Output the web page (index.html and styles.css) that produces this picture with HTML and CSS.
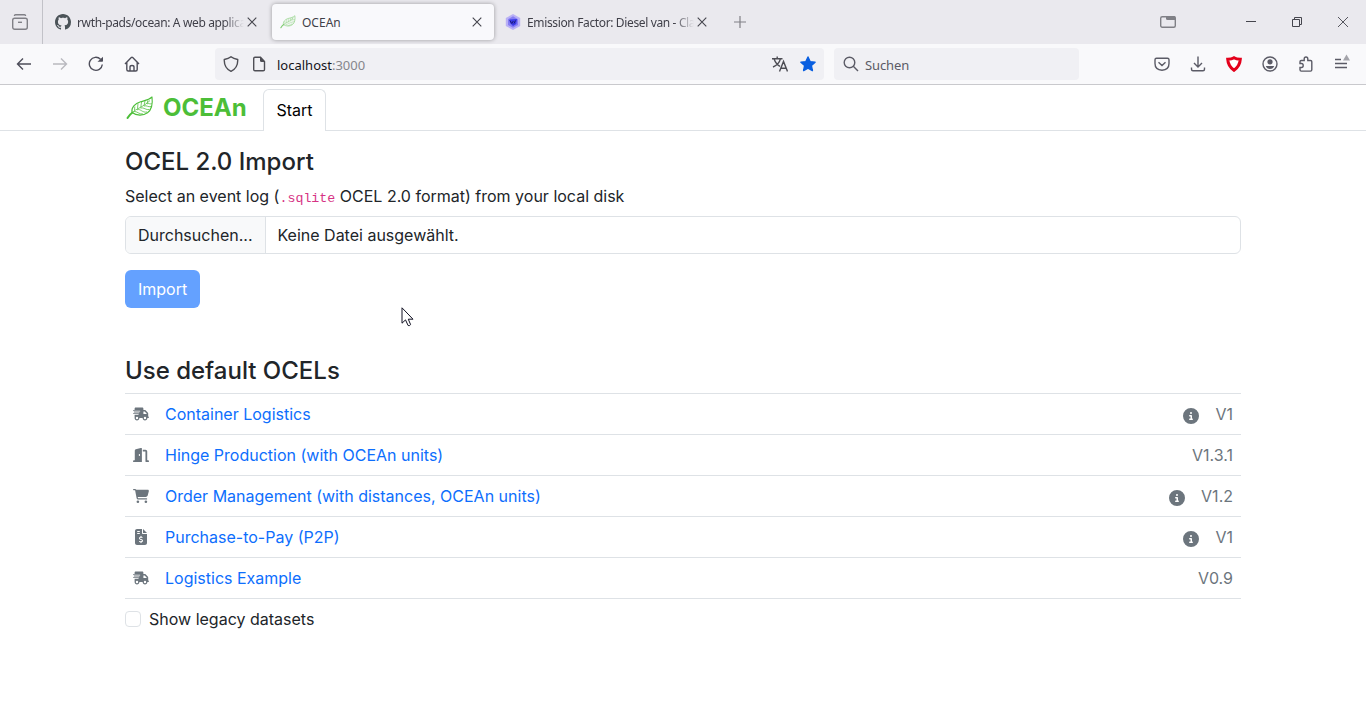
FILE: index.html
```html
<!DOCTYPE html>
<html lang="de">
<head>
<meta charset="utf-8">
<title>OCEAn</title>
<link rel="stylesheet" href="styles.css">
</head>
<body>
<svg class="defs" aria-hidden="true">
  <symbol id="close" viewBox="0 0 16 16"><path d="M3.7 3.7l8.6 8.6M12.3 3.7l-8.6 8.6" fill="none" stroke="currentColor" stroke-width="1.1"/></symbol>
  <symbol id="leaf" viewBox="0 0 28 24">
    <path d="M6 16.500C5 11.500 9 7.500 14.500 5.800C19 4.500 23 4 26 1C26.800 7.500 26 13.500 21.500 16.800C17 20 10.500 19.800 6 16.500Z" fill="none" stroke="currentColor" stroke-width="1.100" stroke-linejoin="round"/>
    <path d="M1.500 22Q3.500 18.500 6.500 16.500" fill="none" stroke="currentColor" stroke-width="2" stroke-linecap="round"/>
    <path d="M6.500 16.500C10 12.500 17 11.500 24 4.500M8.500 14.500L8.800 10.500M11.500 12.700L12 7.500M14.800 11.300L15.500 6M18 9.500L19 5M21 7.300L22 4.200M8 15.500C11 15 13 18.500 17 18M11 13.800C15 12.500 16 17 21 16M14.500 12C18 11 20 14.500 23.500 13.500M18 10C21 9 22 11.500 25 10.500M21 7.800C23 7 24 8.500 25.500 7.500" fill="none" stroke="currentColor" stroke-width=".75"/>
  </symbol>
  <symbol id="truck" viewBox="0 0 640 512"><path fill="currentColor" d="M112 0C85.500 0 64 21.500 64 48V96H16c-8.800 0-16 7.200-16 16s7.200 16 16 16H64 272c8.800 0 16 7.200 16 16s-7.200 16-16 16H64 48c-8.800 0-16 7.200-16 16s7.200 16 16 16H64 240c8.800 0 16 7.200 16 16s-7.200 16-16 16H64 16c-8.800 0-16 7.200-16 16s7.200 16 16 16H64 208c8.800 0 16 7.200 16 16s-7.200 16-16 16H64V416c0 53 43 96 96 96s96-43 96-96H384c0 53 43 96 96 96s96-43 96-96h32c17.700 0 32-14.300 32-32s-14.300-32-32-32V288 256 237.300c0-17-6.700-33.300-18.700-45.300L512 114.700c-12-12-28.300-18.700-45.300-18.700H416V48c0-26.500-21.500-48-48-48H112zM544 237.300V256H416V160h50.700L544 237.300zM160 368a48 48 0 1 1 0 96 48 48 0 1 1 0-96zm272 48a48 48 0 1 1 96 0 48 48 0 1 1 -96 0z"/></symbol>
  <symbol id="door" viewBox="0 0 576 512"><path fill="currentColor" d="M320 32c0-9.900-4.500-19.200-12.300-25.200S289.800-1.400 280.200 1l-179.900 45C79 51.300 64 70.500 64 92.500V448H32c-17.700 0-32 14.300-32 32s14.300 32 32 32H96 288h32V480 32zM256 256c0 17.700-10.700 32-24 32s-24-14.300-24-32s10.700-32 24-32s24 14.300 24 32zm96-128h96V480c0 17.700 14.300 32 32 32h64c17.700 0 32-14.300 32-32s-14.300-32-32-32H512V128c0-35.300-28.700-64-64-64H352v64z"/></symbol>
  <symbol id="cart" viewBox="0 0 576 512"><path fill="currentColor" d="M0 24C0 10.700 10.700 0 24 0H69.500c22 0 41.500 12.800 50.600 32h411c26.300 0 45.500 25 38.600 50.400l-41 152.300c-8.500 31.400-37 53.300-69.500 53.300H170.700l5.400 28.500c2.200 11.300 12.100 19.500 23.600 19.500H488c13.300 0 24 10.700 24 24s-10.700 24-24 24H199.700c-34.600 0-64.300-24.600-70.700-58.500L77.400 54.500c-.7-3.800-4-6.500-7.900-6.500H24C10.700 48 0 37.300 0 24zM128 464a48 48 0 1 1 96 0 48 48 0 1 1 -96 0zm336-48a48 48 0 1 1 0 96 48 48 0 1 1 0-96z"/></symbol>
  <symbol id="invoice" viewBox="0 0 384 512"><path fill="currentColor" d="M64 0C28.700 0 0 28.700 0 64V448c0 35.300 28.700 64 64 64H320c35.300 0 64-28.700 64-64V160H256c-17.700 0-32-14.300-32-32V0H64zM256 0V128H384L256 0zM64 80c0-8.800 7.200-16 16-16h64c8.800 0 16 7.200 16 16s-7.200 16-16 16H80c-8.800 0-16-7.200-16-16zm0 64c0-8.800 7.200-16 16-16h64c8.800 0 16 7.200 16 16s-7.200 16-16 16H80c-8.800 0-16-7.200-16-16zm128 72c8.800 0 16 7.200 16 16v17.300c8.500 1.200 16.700 3.100 24.100 5.100c8.500 2.300 13.600 11 11.300 19.600s-11 13.600-19.600 11.300c-11.100-3-22-5.200-32.100-5.300c-8.400-.1-17.400 1.800-23.600 5.500c-5.700 3.400-8.100 7.300-8.100 12.800c0 3.700 1.300 6.500 7.300 10.100c6.900 4.100 16.600 7.100 29.200 10.900l.5 .1c11.300 3.400 25.300 7.600 36.300 14.600c12.100 7.600 22.400 19.700 22.700 38.200c.3 19.300-9.600 33.300-22.900 41.600c-7.700 4.800-16.400 7.600-25.100 9.100V440c0 8.800-7.200 16-16 16s-16-7.200-16-16V422.200c-11.200-2.100-21.700-5.700-30.900-8.900c-2.100-.7-4.200-1.400-6.200-2.100c-8.400-2.800-12.900-11.900-10.100-20.200s11.900-12.900 20.200-10.100c2.500 .8 4.800 1.600 7.100 2.400c13.600 4.600 24.600 8.400 36.300 8.700c9.100 .3 17.900-1.700 23.700-5.300c5.100-3.200 7.900-7.300 7.800-14c-.1-4.600-1.800-7.800-7.700-11.600c-6.800-4.300-16.500-7.400-29-11.200l-1.600-.5c-11-3.300-24.300-7.300-34.800-13.700c-12-7.200-22.600-18.900-22.700-37.300c-.1-19.400 10.800-32.800 23.800-40.500c7.500-4.400 15.800-7.200 24.100-8.700V232c0-8.800 7.200-16 16-16z"/></symbol>
  <symbol id="info" viewBox="0 0 512 512"><path fill="currentColor" d="M256 512A256 256 0 1 0 256 0a256 256 0 1 0 0 512zM216 336h24V272H216c-13.300 0-24-10.700-24-24s10.700-24 24-24h48c13.300 0 24 10.700 24 24v88h8c13.300 0 24 10.700 24 24s-10.700 24-24 24H216c-13.300 0-24-10.700-24-24s10.700-24 24-24zm40-208a32 32 0 1 1 0 64 32 32 0 1 1 0-64z"/></symbol>
</svg>

<div class="tabbar">
  <div class="view-button">
    <svg class="icon muted" viewBox="0 0 16 16" fill="none" stroke="currentColor" stroke-width="1.400"><path d="M2.500 2V1.500Q2.500.7 3.500.7h9q1 0 1 .8V2"/><rect x=".7" y="4.300" width="14.600" height="11" rx="2"/><path d="M6 8.300h4"/></svg>
  </div>
  <div class="tab">
    <svg class="icon github" viewBox="0 0 16 16"><path fill="currentColor" d="M8 0C3.580 0 0 3.580 0 8c0 3.540 2.290 6.530 5.470 7.590.4.070.55-.17.55-.38 0-.19-.01-.82-.01-1.490-2.010.37-2.530-.49-2.690-.94-.09-.23-.48-.94-.82-1.130-.28-.15-.68-.52-.01-.53.63-.01 1.080.58 1.230.82.72 1.210 1.870.87 2.330.66.070-.52.28-.87.51-1.070-1.780-.2-3.640-.89-3.640-3.950 0-.87.31-1.590.82-2.150-.08-.2-.36-1.020.08-2.120 0 0 .67-.21 2.200.82.64-.18 1.320-.27 2-.27s1.360.09 2 .27c1.530-1.040 2.200-.82 2.200-.82.44 1.100.16 1.920.08 2.120.51.56.82 1.270.82 2.150 0 3.070-1.870 3.750-3.650 3.950.29.25.54.73.54 1.480 0 1.070-.01 1.930-.01 2.200 0 .21.15.46.55.38A8.010 8.010 0 0 0 16 8c0-4.420-3.580-8-8-8z"/></svg>
    <span class="tab-title long">rwth-pads/ocean: A web applica</span>
    <svg class="icon dark"><use href="#close"/></svg>
  </div>
  <div class="tab active">
    <svg class="icon tab-leaf"><use href="#leaf"/></svg>
    <span class="tab-title">OCEAn</span>
    <svg class="icon dark"><use href="#close"/></svg>
  </div>
  <div class="tab">
    <svg class="icon" viewBox="0 0 16 16"><path d="M8 0l7.200 4v8L8 16 .8 12V4z" fill="#b9b0f5"/><path d="M8 2.300l5 2.900v5.700l-5 2.900-5-2.900V5.200z" fill="#857cf3"/><path d="M4.500 5.500l7.500-.5-.7 5L8 12l-3-3z" fill="#3a3ae6"/><path d="M4.800 6.500l2 3 1.500-2.500M9 9.500l1.500-3" stroke="#1b1b78" fill="none"/></svg>
    <span class="tab-title long">Emission Factor: Diesel van - Cla</span>
    <svg class="icon dark"><use href="#close"/></svg>
  </div>
  <svg class="icon muted plus" viewBox="0 0 16 16"><path d="M8 2v12M2 8h12" stroke="currentColor" stroke-width="1.200"/></svg>
  <div class="window-buttons">
    <svg class="icon muted" viewBox="0 0 16 16"><rect x=".7" y="2.700" width="14.600" height="10.600" rx="1.500" fill="none" stroke="currentColor" stroke-width="1.400"/><path d="M6 2h8.500l1 1v3H7.500Q6 6 6 4.500z" fill="currentColor"/></svg>
    <svg class="icon dark" viewBox="0 0 16 16"><path d="M3 7.500h10" stroke="currentColor"/></svg>
    <svg class="icon dark" viewBox="0 0 16 16" fill="none" stroke="currentColor"><path d="M3.500 5.500h7v7h-7zM5.500 5.500v-2h7v7h-2"/></svg>
    <svg class="icon dark" viewBox="0 0 16 16"><path d="M3 3l10 10M13 3L3 13" stroke="currentColor" stroke-width=".9"/></svg>
  </div>
</div>

<div class="toolbar">
  <div class="nav-buttons">
    <svg class="icon" viewBox="0 0 16 16"><path d="M15 8H1.500M7 2.500L1.500 8 7 13.500"/></svg>
    <svg class="icon disabled" viewBox="0 0 16 16"><path d="M1 8h13.500M9 2.500L14.500 8 9 13.500"/></svg>
    <svg class="icon" viewBox="0 0 16 16"><path d="M14.300 8.500A6.500 6.500 0 1 1 12.500 3.300"/><path d="M9.500 5.800h4.700q.8 0 .8-.8V.8z" fill="currentColor" stroke="none"/></svg>
    <svg class="icon" viewBox="0 0 16 16"><path d="M1 8L7.300 1.500q.7-.6 1.400 0L15 8M2.800 6.500v7q0 1.500 1.500 1.500h7.400q1.500 0 1.500-1.500v-7M6 15v-4q0-1.500 2-1.500t2 1.500v4"/></svg>
  </div>
  <div class="urlbar">
    <svg class="icon" viewBox="0 0 16 16"><path d="M8 .8C6 2.400 3.500 3.100 1.300 3.500 1 9 3 13 8 15.300 13 13 15 9 14.700 3.500 12.500 3.100 10 2.400 8 .8z"/></svg>
    <svg class="icon page-icon" viewBox="0 0 16 16"><path d="M9.500 1.200H4Q2.700 1.200 2.700 2.500v11q0 1.300 1.300 1.300h8.200q1.300 0 1.300-1.300v-8z"/><path d="M9 1v3.500q0 1.500 1.500 1.500h3.500z" fill="currentColor" stroke="none"/></svg>
    <span class="url">localhost<span class="port">:3000</span></span>
    <svg class="icon translate" viewBox="0 0 16 16"><path d="M0 2.700h10.500M5.200.5v2.200M2 2.700C3.500 7 5.500 9 8 10.300M8.500 2.700C7.500 7 4.500 9.500 1 11M7.500 15.500L11.500 5.500l4 10M9 12.200h5"/></svg>
    <svg class="icon star" viewBox="0 0 16 16"><path d="M8 1l2.100 4.600 5 .6-3.700 3.400 1 5L8 12.100l-4.400 2.500 1-5L.9 6.200l5-.6z"/></svg>
  </div>
  <div class="searchbar">
    <svg class="icon" viewBox="0 0 16 16"><circle cx="6.500" cy="6.500" r="5.300"/><path d="M10.300 10.300l4.700 4.700"/></svg>
    <span class="search-label">Suchen</span>
  </div>
  <div class="actions">
    <svg class="icon" viewBox="0 0 16 16"><path d="M2.500 2.300h11q1.500 0 1.500 1.500V7.500q0 6.300-7 6.700Q1 13.800 1 7.500V3.800q0-1.500 1.500-1.500zM4.500 6.300L8 9.500l3.500-3.200"/></svg>
    <svg class="icon" viewBox="0 0 16 16"><path d="M8 .5v10M4 7l4 4 4-4M1.500 11.500v1.700q0 1.500 1.500 1.500h10q1.500 0 1.500-1.500v-1.700"/></svg>
    <svg class="icon ublock" viewBox="0 0 16 16"><path d="M8 1.700C6.500 2.600 4.500 3.100 1.700 3.200 2 8.500 4 11.500 8 14.300 12 11.500 14 8.500 14.300 3.200 11.500 3.100 9.500 2.600 8 1.700z"/></svg>
    <svg class="icon" viewBox="0 0 16 16"><circle cx="8" cy="8" r="7"/><circle cx="8" cy="5.800" r="2.600" fill="currentColor" stroke="none"/><path d="M3.800 10h8.400q-1 3-4.200 3t-4.200-3z" fill="currentColor" stroke="none"/></svg>
    <svg class="icon" viewBox="0 0 16 16"><path d="M2 7.500V5.800Q2 4.500 3.300 4.500H6.200V3q0-2 1.800-2t1.800 2v1.500h2.700q1.300 0 1.300 1.300v8q0 1.300-1.300 1.300H3.300Q2 15.100 2 13.800V11.500h1.500q1.700 0 1.700-2t-1.700-2z"/></svg>
    <svg class="icon menu" viewBox="0 0 16 18"><path d="M1 5.500h6M1 9.500h12M1 13.500h12"/><path d="M9 6.500L12.500.5l3.500 6z" fill="#a4a4aa" stroke="none"/></svg>
  </div>
</div>

<header class="app-header">
  <div class="container header-row">
    <div class="brand"><svg class="brand-leaf"><use href="#leaf"/></svg><span>OCEAn</span></div>
    <div class="nav-tab">Start</div>
  </div>
</header>

<main class="container content">
  <h4>OCEL 2.0 Import</h4>
  <p class="hint">Select an event log (<code>.sqlite</code> OCEL 2.0 format) from your local disk</p>
  <div class="file-input"><span class="browse">Durchsuchen...</span><span class="file-name">Keine Datei ausgewählt.</span></div>
  <button class="import" disabled>Import</button>

  <h4>Use default OCELs</h4>
  <div class="list">
    <div class="row"><svg class="icon"><use href="#truck"/></svg><a>Container Logistics</a><svg class="icon info"><use href="#info"/></svg><span>V1</span></div>
    <div class="row"><svg class="icon"><use href="#door"/></svg><a>Hinge Production (with OCEAn units)</a><span>V1.3.1</span></div>
    <div class="row"><svg class="icon"><use href="#cart"/></svg><a>Order Management (with distances, OCEAn units)</a><svg class="icon info"><use href="#info"/></svg><span>V1.2</span></div>
    <div class="row"><svg class="icon"><use href="#invoice"/></svg><a>Purchase-to-Pay (P2P)</a><svg class="icon info"><use href="#info"/></svg><span>V1</span></div>
    <div class="row"><svg class="icon"><use href="#truck"/></svg><a>Logistics Example</a><span>V0.9</span></div>
  </div>
  <label class="legacy"><input type="checkbox"><span>Show legacy datasets</span></label>
</main>

<svg class="cursor" viewBox="0 0 13 20"><path d="M1 .8v15.400l3.500-3.300 2.600 5.600q1.200.8 2.500-.9L7.300 12.200H12z" fill="#fff" stroke="#111122" stroke-width="1"/></svg>
</body>
</html>
```

FILE: styles.css
```css
* { box-sizing: border-box; }
body {
  margin: 0;
  height: 728px;
  overflow: hidden;
  background: #fff;
  color: #212529;
  font: 16px/24px Inter, sans-serif;
}
.defs { position: absolute; width: 0; height: 0; }
.icon { width: 16px; height: 16px; flex: none; display: block; }
.muted { color: #808086; }
.dark { color: #45454d; }

/* browser tab strip */
.tabbar {
  display: flex;
  align-items: center;
  height: 44px;
  background: #eae9ee;
  font: 12px/18px "Noto Sans", sans-serif;
  color: #3f3f48;
}
.view-button {
  display: flex;
  align-items: center;
  width: 43px;
  height: 44px;
  padding-left: 12px;
  margin-right: 4px;
  border-right: 1px solid #c2c2c8;
}
.tab {
  display: flex;
  align-items: center;
  width: 222px;
  height: 36px;
  margin-right: 3px;
  padding-left: 8px;
  border-radius: 4px;
}
.tab.active { background: #f9f9fc; box-shadow: 0 0 4px rgba(0, 0, 0, .35); }
.tab-title {
  width: 167px;
  padding-top: 2px;
  margin-left: 6px;
  overflow: hidden;
  white-space: nowrap;
}
.tab-title.long {
  letter-spacing: -.36px;
  -webkit-mask-image: linear-gradient(to left, transparent 0, #000 20px);
  mask-image: linear-gradient(to left, transparent 0, #000 20px);
}
.github { color: #4b5358; }
.tab-leaf { color: #7fcb72; }
.plus { margin-left: 10px; }
.window-buttons { display: flex; margin-left: auto; padding-right: 15px; gap: 30px; }
.window-buttons .icon:first-child { margin-right: 37px; }

/* browser navigation bar */
.toolbar {
  display: flex;
  align-items: center;
  height: 41px;
  background: #f9f9fb;
  border-bottom: 1px solid #c9c9cd;
  font: 13px/18px "Noto Sans", sans-serif;
  color: #5b5b66;
}
.toolbar .icon { fill: none; stroke: currentColor; stroke-width: 1.4; }
.nav-buttons { display: flex; gap: 20px; width: 215px; padding-left: 16px; color: #4e4e5a; }
.toolbar .disabled { color: #b9b9bf; }
.urlbar, .searchbar { display: flex; align-items: center; height: 32px; background: #f0f0f4; border-radius: 4px; }
.urlbar { width: 609px; padding: 0 8px; color: #4e4e55; }
.page-icon { margin-left: 12px; }
.url { margin-left: 10px; padding-top: 2px; color: #15141a; }
.port { color: #86868c; }
.translate { margin-left: auto; }
.toolbar .star { margin-left: 12px; fill: #0a5fe0; stroke: #0a5fe0; stroke-linejoin: round; }
.searchbar { width: 245px; margin-left: 10px; padding-left: 9px; gap: 6px; }
.search-label { padding-top: 2px; letter-spacing: -.1px; }
.actions { display: flex; gap: 20px; margin-left: auto; padding-right: 16px; }
.toolbar .ublock { stroke: #e4001b; stroke-width: 3; fill: #fff; }
.toolbar .menu { height: 18px; margin-top: -2px; }

/* application */
.container { width: 1116px; margin: 0 auto; }
.app-header { height: 46px; border-bottom: 1px solid #dee2e6; }
.header-row { display: flex; padding-top: 4px; }
.brand {
  display: flex;
  width: 138px;
  height: 38px;
  align-items: center;
  color: #4cbe38;
  font-size: 24px;
  font-weight: 700;
}
.brand-leaf { width: 28px; height: 24px; margin: 0 9px 0 1px; }
.nav-tab {
  width: 63px;
  height: 42px;
  padding: 8px 0 0 12.5px;
  border: 1px solid #dee2e6;
  border-bottom: 0;
  border-radius: 6px 6px 0 0;
  background: #fff;
  color: #000;
}
.content { padding-top: 16px; }
h4 { margin: 0 0 8px; font-size: 24px; line-height: 29px; font-weight: 500; }
.hint { margin: 0 0 8px; }
code { font: 13.3px "Liberation Mono", monospace; color: #d63384; }
.file-input { display: flex; height: 38px; border: 1px solid #dee2e6; border-radius: 6px; overflow: hidden; }
.browse { padding: 6px 12.5px 6px 12px; background: #f8f9fa; border-right: 1px solid #dee2e6; }
.file-name { padding: 6px 11.5px; }
.import {
  display: block;
  height: 38px;
  margin: 16px 0 48px;
  padding: 0 13px;
  border: 0;
  border-radius: 6px;
  background: #64a1ff;
  color: #fff;
  font: 16px/24px Inter, sans-serif;
}
.list { border-top: 1px solid #dee2e6; color: #6c757d; }
.row { display: flex; align-items: center; height: 41px; padding: 0 8px; border-bottom: 1px solid #dee2e6; }
.row a { margin: 0 auto 0 16px; color: #0d6efd; }
.info { margin: 3px 16px 0 0; }
.legacy { display: flex; align-items: center; gap: 8px; margin-top: 8px; }
.legacy input { appearance: none; width: 16px; height: 16px; margin: 0; border: 1px solid #dee2e6; border-radius: 4px; }
.cursor { position: absolute; left: 401px; top: 307px; width: 13px; height: 20px; }
```
